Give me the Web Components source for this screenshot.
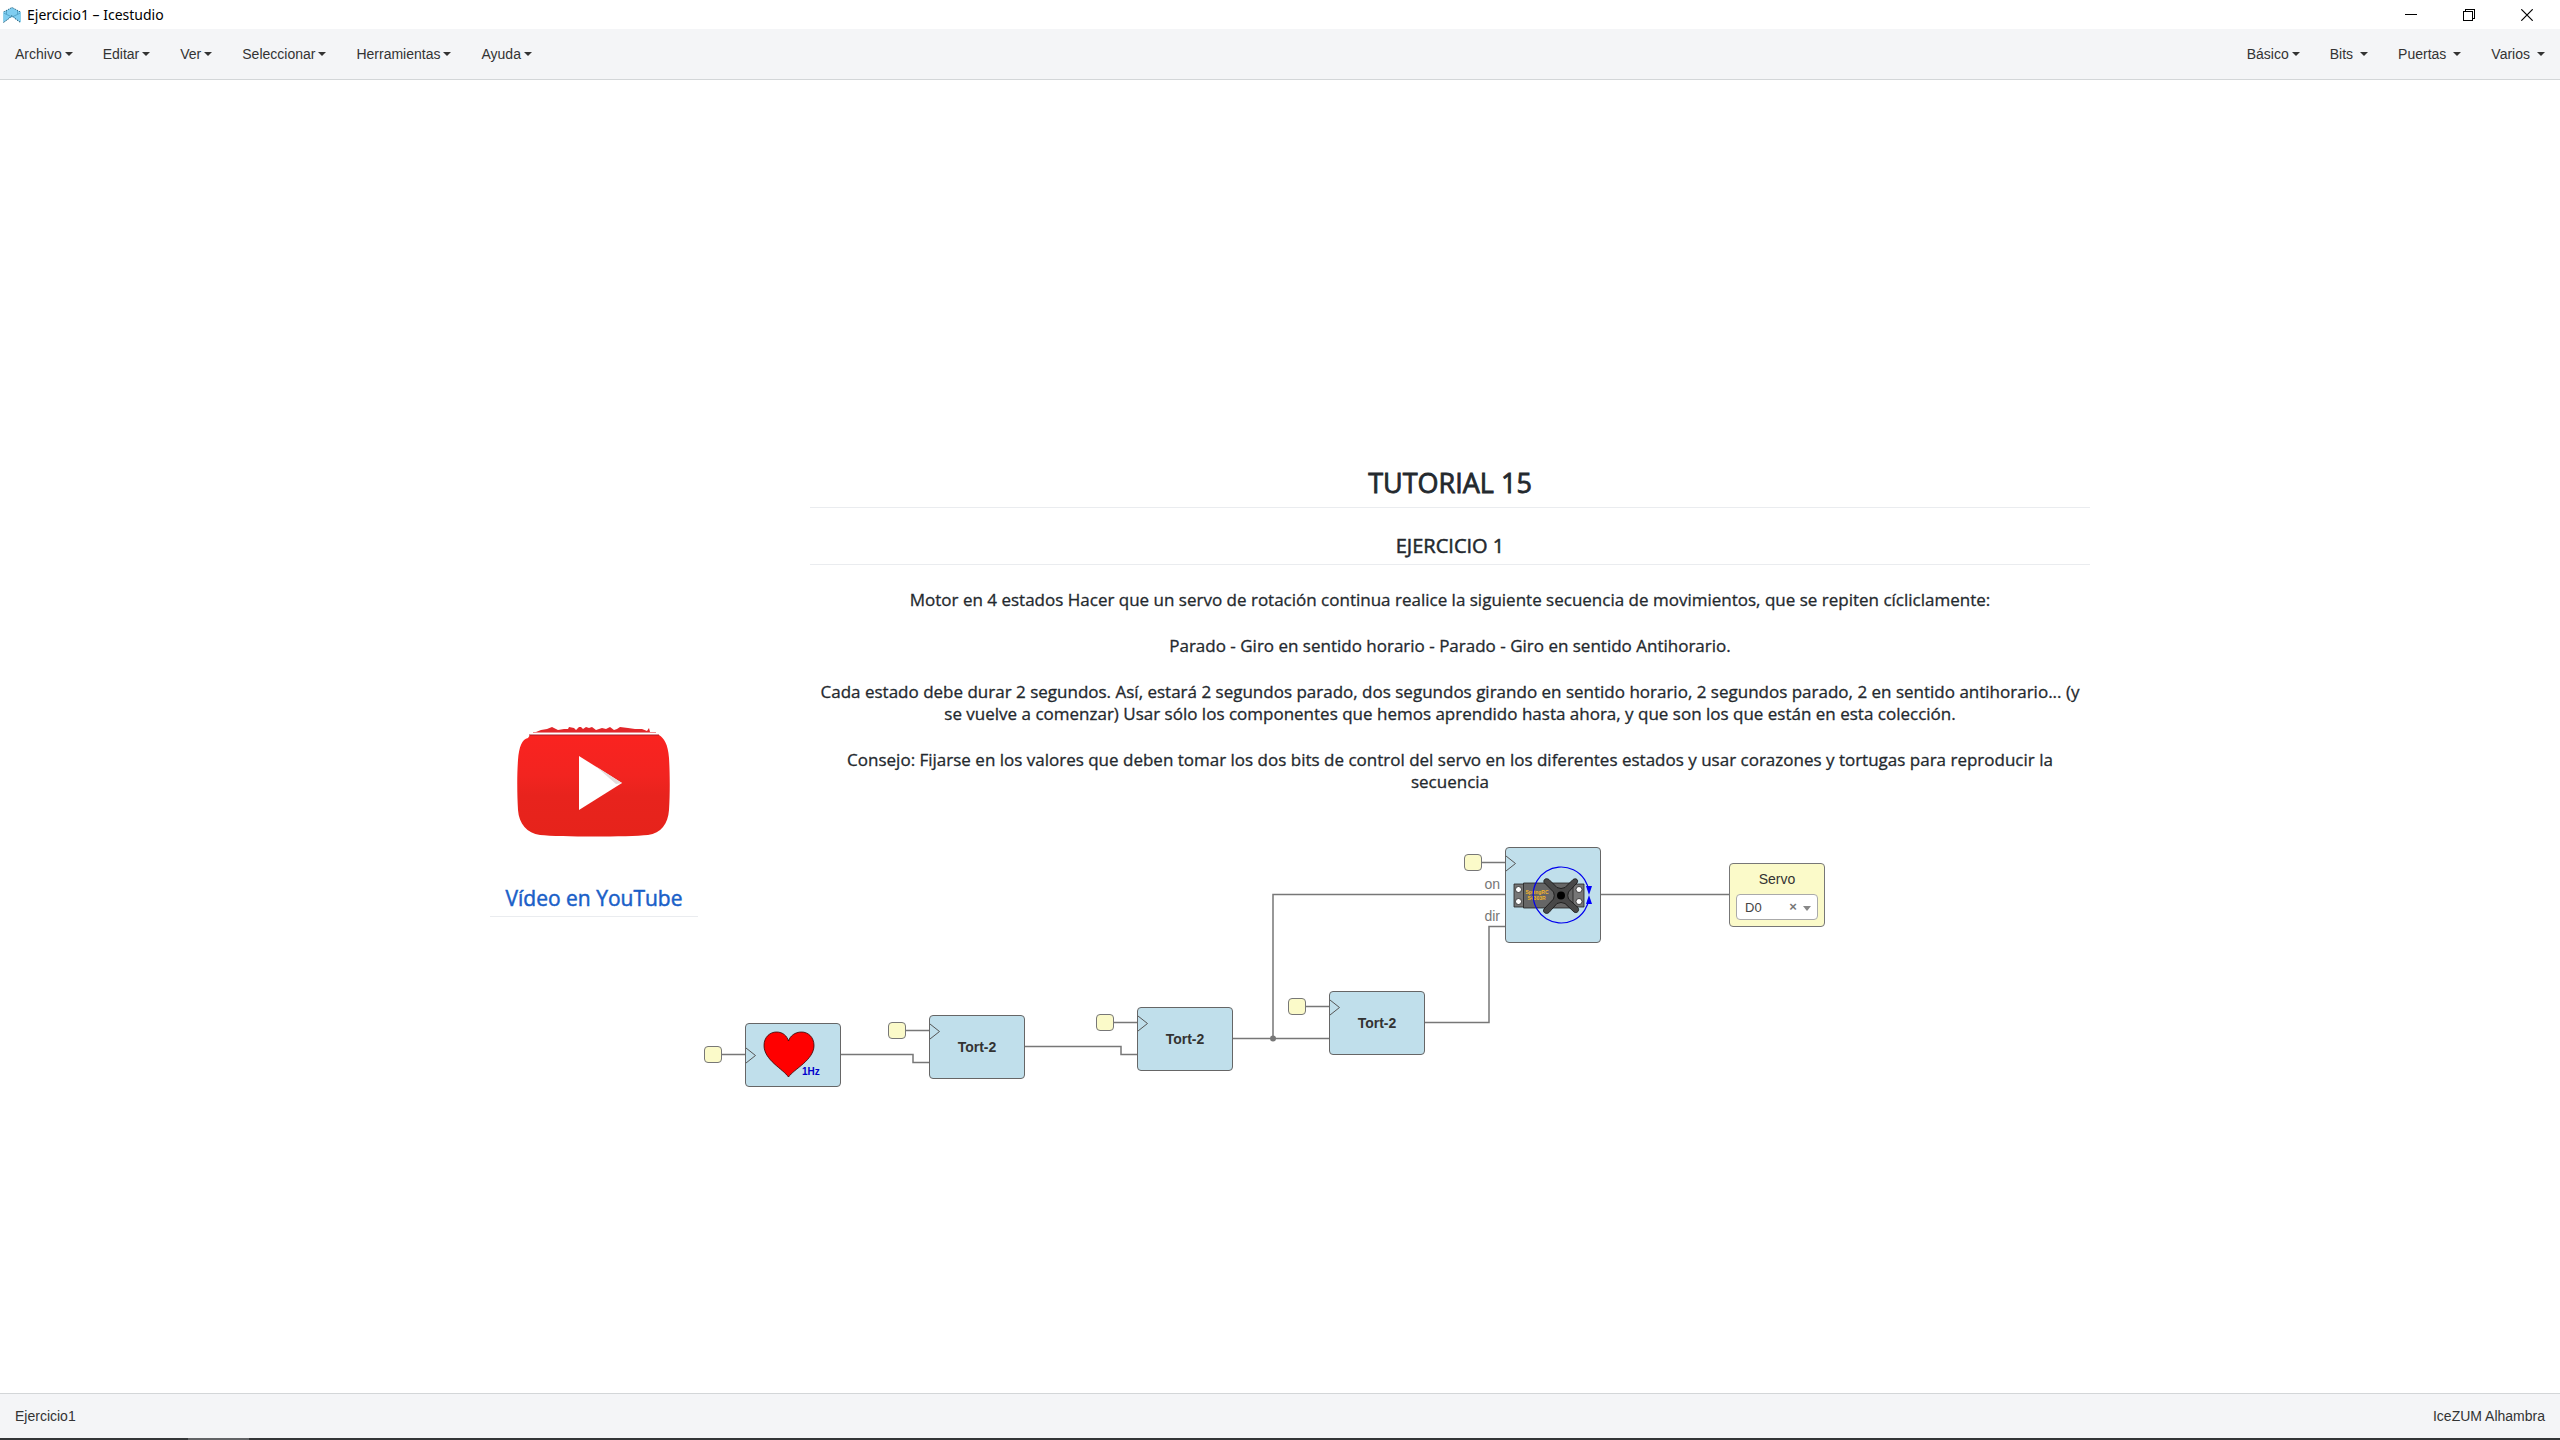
<!DOCTYPE html>
<html lang="es">
<head>
<meta charset="utf-8">
<title>Ejercicio1 – Icestudio</title>
<style>
html, body { margin: 0; height: 100%; }
body { background: #fff; font-family: "Liberation Sans", Arial, sans-serif; font-size: 14px; color: #333; }
</style>
</head>
<body>
<ice-app></ice-app>

<template id="t-app">
<style>
:host { display: flex; flex-direction: column; min-height: 100vh; }
ice-canvas { flex: 1; }
</style>
<ice-titlebar>Ejercicio1 – Icestudio</ice-titlebar>
<ice-menubar>
  <ice-menu>Archivo</ice-menu>
  <ice-menu>Editar</ice-menu>
  <ice-menu>Ver</ice-menu>
  <ice-menu>Seleccionar</ice-menu>
  <ice-menu>Herramientas</ice-menu>
  <ice-menu>Ayuda</ice-menu>
  <ice-menu slot="end">Básico</ice-menu>
  <ice-menu slot="end" spaced>Bits</ice-menu>
  <ice-menu slot="end" spaced>Puertas</ice-menu>
  <ice-menu slot="end" spaced>Varios</ice-menu>
</ice-menubar>
<ice-canvas>
  <ice-wires></ice-wires>
  <ice-video x="490" y="646"></ice-video>
  <ice-doc x="810" y="386"></ice-doc>

  <ice-pin x="704" y="966"></ice-pin>
  <ice-block x="745" y="943" w="96" h="64" clk="32"><ice-heart></ice-heart></ice-block>

  <ice-pin x="888" y="942"></ice-pin>
  <ice-block x="929" y="935" w="96" h="64" clk="16">Tort-2</ice-block>

  <ice-pin x="1096" y="934"></ice-pin>
  <ice-block x="1137" y="927" w="96" h="64" clk="16">Tort-2</ice-block>

  <ice-pin x="1288" y="918"></ice-pin>
  <ice-block x="1329" y="911" w="96" h="64" clk="16">Tort-2</ice-block>

  <ice-pin x="1464" y="774"></ice-pin>
  <ice-port-label x="1464" y="796">on</ice-port-label>
  <ice-port-label x="1464" y="828">dir</ice-port-label>
  <ice-block x="1505" y="767" w="96" h="96" clk="16"><ice-servo-art></ice-servo-art></ice-block>

  <ice-output x="1729" y="783">Servo</ice-output>
</ice-canvas>
<ice-statusbar>Ejercicio1<span slot="end">IceZUM Alhambra</span></ice-statusbar>
<ice-taskbar-edge></ice-taskbar-edge>
</template>

<template id="t-titlebar">
<style>
:host { display: flex; align-items: center; height: 29px; padding: 0 4px 0 3px; background: #fff; color: #000;
  font-family: "Noto Sans", "Open Sans", sans-serif; font-size: 14px; }
.logo { width: 18px; height: 16px; margin-right: 6px; }
.name { flex: 1; }
button { width: 58px; height: 29px; padding: 0; border: 0; background: none; display: flex; align-items: center; justify-content: center; }
</style>
<svg class="logo" viewBox="0 0 18 16">
  <path d="M9 0.500L17.500 5V15.500L12.500 12L9 9.500L5.500 12L.5 15.500V5Z" fill="#7fcdf0"/>
  <path d="M.5 5L9 .5L17.500 5" fill="none" stroke="#2f6d8a" stroke-width="1" stroke-dasharray="1.500 1"/>
  <path d="M.5 6L9 10L17.500 6M3.500 4V7M14.500 4V7" fill="none" stroke="#4a9cc0" stroke-width=".8"/>
  <path d="M.5 15.500L6 11.500L9 8.500L12 11.500L17.500 15.500" fill="none" stroke="#255a74" stroke-width="1" stroke-dasharray="1.500 1"/>
  <path d="M.5 5V15M17.500 5V15" stroke="#8fd0ea" stroke-width="1"/>
</svg>
<span class="name"><slot></slot></span>
<button aria-label="Minimizar"><svg width="12" height="12" shape-rendering="crispEdges"><path d="M0 5.5H12" stroke="#000"/></svg></button>
<button aria-label="Restaurar"><svg width="12" height="12" shape-rendering="crispEdges" fill="none" stroke="#000"><path d="M.5 2.500H9.500V11.500H.500Z M2.500 2.500V.500H11.500V9.500H9.500"/></svg></button>
<button aria-label="Cerrar"><svg width="12" height="12" stroke="#000" stroke-width="1.200"><path d="M.300 .300L11.700 11.700M11.700 .300L.300 11.700"/></svg></button>
</template>

<template id="t-menubar">
<style>
:host { display: block; }
nav { display: flex; justify-content: space-between; height: 50px; background: #f4f5f7; border-bottom: 1px solid #d3d6d8; }
div { display: flex; }
</style>
<nav><div><slot></slot></div><div><slot name="end"></slot></div></nav>
</template>

<template id="t-menu">
<style>
:host { display: block; }
button { display: flex; align-items: center; height: 50px; padding: 0 15px; border: 0; background: none; font: inherit; color: #333; }
i { width: 0; height: 0; margin-left: 3px; border: 4px solid transparent; border-top-color: #333; border-bottom: 0; }
:host([spaced]) i { margin-left: 7px; }
</style>
<button aria-haspopup="true"><slot></slot><i></i></button>
</template>

<template id="t-canvas">
<style>
:host { display: block; position: relative; overflow: hidden; background: #fff; }
</style>
<slot></slot>
</template>

<template id="t-wires">
<style>
:host { position: absolute; inset: 0; }
svg { display: block; width: 100%; height: 100%; }
</style>
<svg fill="none" stroke="#777" stroke-width="1.500">
  <path d="M721 974.500H745 M905 950.500H929 M1113 942.500H1137 M1305 926.500H1329 M1481 782.500H1505"/>
  <path d="M841 974.500H913V982.500H929"/>
  <path d="M1025 966.500H1121V974.500H1137"/>
  <path d="M1233 958.500H1329"/>
  <path d="M1273 958.500V814.500H1505"/>
  <path d="M1425 942.500H1489V846.500H1505"/>
  <path d="M1601 814.500H1729"/>
  <circle cx="1273" cy="958.500" r="3" fill="#777" stroke="none"/>
</svg>
</template>

<template id="t-video">
<style>
:host { position: absolute; width: 208px; }
a { display: block; color: #1a5fc8; text-decoration: none; }
svg { display: block; margin: 0 auto; }
h3 { margin: 44px 0 0; padding-bottom: 6px; border-bottom: 1px solid #eaecef; text-align: center;
  font: 400 21px/24px "Open Sans", "Noto Sans", sans-serif; -webkit-text-stroke: .5px; }
</style>
<a href="#video">
<svg width="156" height="116" viewBox="0 0 156 116">
  <defs><linearGradient id="g" x2="0" y2="1"><stop offset="0" stop-color="#fa2320"/><stop offset=".4" stop-color="#f22420"/><stop offset=".6" stop-color="#e8231d"/><stop offset="1" stop-color="#e6231b"/></linearGradient></defs>
  <path d="M20 6 L25 4 L31 3 L36 1 L42 4 L48 3 L52 3 L53 1 L58 2 L60 4 L63 1 L65 1 L67 3 L70 1 L73 2 L76 1 L80 4 L86 2 L90 3 L94 1 L98 4 L101 3 L104 1 L112 2 L119 3 L126 3 L131 5 L133 2 L134 6 L139 6 Z" fill="#e2262a"/>
  <path d="M17 6.500H140" stroke="#f08a8e" stroke-width="1"/>
  <path d="M14 9H143C148 12 152 18 153 32C154 48 154 68 153 84C152 98 145 107 132 109C112 111 44 111 24 109C11 107 3 98 2 84C1 68 1 48 2 34C3 21 6 13 12 12Z" fill="url(#g)"/>
  <path d="M13 9H143" stroke="#a51c26" stroke-width="1"/>
  <path d="M63 30L106 57L63 84Z" fill="#fff"/>
  <path d="M80 40.500L106 57L100 58Z" fill="#e4dcdc"/>
</svg>
<h3>Vídeo en YouTube</h3>
</a>
</template>

<template id="t-doc">
<style>
:host { position: absolute; width: 1280px; text-align: center; color: #24292e; font: 17px/22px "Open Sans", "Noto Sans", sans-serif; -webkit-text-stroke: .3px; }
h1, h2 { margin: 0; border-bottom: 1px solid #eaecef; font-weight: 400; }
h1 { padding-bottom: 7px; font-size: 27px; line-height: 34px; -webkit-text-stroke: .8px; }
h2 { margin-top: 26px; padding-bottom: 6px; font-size: 20px; line-height: 24px; -webkit-text-stroke: .5px; }
p { margin: 24px 0 0; }
</style>
<h1>TUTORIAL 15</h1>
<h2>EJERCICIO 1</h2>
<p>Motor en 4 estados Hacer que un servo de rotación continua realice la siguiente secuencia de movimientos, que se repiten cícliclamente:</p>
<p>Parado - Giro en sentido horario - Parado - Giro en sentido Antihorario.</p>
<p>Cada estado debe durar 2 segundos. Así, estará 2 segundos parado, dos segundos girando en sentido horario, 2 segundos parado, 2 en sentido antihorario... (y se vuelve a comenzar) Usar sólo los componentes que hemos aprendido hasta ahora, y que son los que están en esta colección.</p>
<p>Consejo: Fijarse en los valores que deben tomar los dos bits de control del servo en los diferentes estados y usar corazones y tortugas para reproducir la secuencia</p>
</template>

<template id="t-pin">
<style>
:host { position: absolute; width: 18px; height: 17px; box-sizing: border-box; border: 1px solid #777; border-radius: 4px; background: #fbfac9; }
</style>
</template>

<template id="t-port-label">
<style>
:host { position: absolute; width: 36px; text-align: right; line-height: 16px; color: #777; }
</style>
<slot></slot>
</template>

<template id="t-block">
<style>
:host { position: absolute; display: flex; align-items: center; justify-content: center; box-sizing: border-box;
  border: 1px solid #666; border-radius: 4px; background: #c0dfeb; font-weight: bold; color: #333; }
.clk { position: absolute; left: 0; margin-top: -9px; }
</style>
<svg class="clk" width="11" height="17" fill="none" stroke="#555"><path d="M0 1L9.500 8.500L0 16"/></svg>
<slot></slot>
</template>

<template id="t-heart">
<style>:host { display: block; } svg { display: block; } text { font: bold 10px "Liberation Sans", Arial, sans-serif; fill: #00c; }</style>
<svg width="94" height="62" viewBox="1 1 94 62">
  <path d="M43.500 54C38 46 19 37 19 22.500C19 14 25 9 31.500 9C38 9 42 13 43.500 18C45 13 50 9 56.500 9C63 9 69 14 69 22.500C69 37 49 46 43.500 54Z" fill="#f00" stroke="#300" stroke-width=".8"/>
  <text x="57" y="52">1Hz</text>
</svg>
</template>

<template id="t-servo-art">
<style>:host { display: block; } svg { display: block; } text { font: bold 5px "Liberation Sans", Arial, sans-serif; fill: #f5b52a; }</style>
<svg width="94" height="94" viewBox="1 1 94 94">
  <g stroke="#222" stroke-width=".8">
    <path d="M9 37H79V60H9Z" fill="#777"/>
    <path d="M18.500 36H68V61H18.500Z" fill="#666"/>
    <g fill="#fff"><circle cx="13.500" cy="42.500" r="3"/><circle cx="13.500" cy="54.500" r="3"/><circle cx="74" cy="42.500" r="3"/><circle cx="74" cy="54.500" r="3"/></g>
  </g>
  <text x="20.500" y="47">SpringRC</text>
  <text x="22.500" y="53">S4303R</text>
  <path d="M84 45A28 28 0 1 0 84 51" fill="none" stroke="#00e" stroke-width="1.200"/>
  <path d="M81 39H87L84 48ZM81 57H87L84 48Z" fill="#00f"/>
  <path d="M39 35.500C38 32.500 41 30.500 44 32.500L52 40.500Q56 42.500 60 40.500L68 32.500C71 30.500 74 33 72 36L63.500 45Q62 48.500 63.500 52L73 60.500C75 63.500 72 67 69 65L60 56.500Q56 54.500 52 56.500L44 65.500C41 68 37 65 39 62L48.500 52Q50 48.500 48.500 45Z" fill="#484848" stroke="#111" stroke-width=".8"/>
  <circle cx="56" cy="48.500" r="4" fill="#000"/>
</svg>
</template>

<template id="t-output">
<style>
:host { position: absolute; box-sizing: border-box; width: 96px; height: 64px; padding: 6px; border: 1px solid #777; border-radius: 4px; background: #fbfac9; }
label { display: block; line-height: 18px; margin-bottom: 6px; text-align: center; }
.box { position: relative; }
select { appearance: none; display: block; box-sizing: border-box; width: 100%; height: 26px; padding: 0 0 0 8px; border: 1px solid #aaa; border-radius: 4px; background: #fff; font: 13px "Liberation Sans", Arial, sans-serif; color: #444; }
button { position: absolute; right: 19px; top: 5px; width: 12px; height: 16px; padding: 0; border: 0; background: none; font: bold 13px/16px "Liberation Sans", Arial, sans-serif; color: #777; }
i { position: absolute; right: 7px; top: 12px; border: 4px solid transparent; border-top: 5px solid #888; border-bottom: 0; pointer-events: none; }
</style>
<label for="pin"><slot></slot></label>
<div class="box">
  <select id="pin"><option>D0</option></select>
  <button aria-label="Quitar">×</button><i></i>
</div>
</template>

<template id="t-statusbar">
<style>
:host { display: block; }
footer { display: flex; justify-content: space-between; padding: 1px 15px 0; background: #f4f5f7; border-top: 1px solid #d3d6d8; line-height: 43px; }
</style>
<footer><span><slot></slot></span><slot name="end"></slot></footer>
</template>

<template id="t-taskbar-edge">
<style>
:host { display: flex; height: 2px; padding-left: 188px; background: #343638; }
i { width: 61px; background: #626466; }
</style>
<i></i>
</template>

<script>
class IceElement extends HTMLElement {
  constructor() {
    super();
    const name = this.localName.slice(4);
    this.attachShadow({ mode: 'open' })
      .append(document.getElementById('t-' + name).content.cloneNode(true));
  }
}

/* An element placed by its x and y attributes on the design canvas. */
class IceNode extends IceElement {
  connectedCallback() {
    this.style.left = this.getAttribute('x') + 'px';
    this.style.top = this.getAttribute('y') + 'px';
  }
}

class IceBlock extends IceNode {
  connectedCallback() {
    super.connectedCallback();
    this.style.width = this.getAttribute('w') + 'px';
    this.style.height = this.getAttribute('h') + 'px';
    this.shadowRoot.querySelector('.clk').style.top = this.getAttribute('clk') + 'px';
  }
}

for (const name of ['titlebar', 'menubar', 'menu', 'canvas', 'wires', 'heart', 'servo-art', 'statusbar', 'taskbar-edge'])
  customElements.define('ice-' + name, class extends IceElement {});
for (const name of ['video', 'doc', 'pin', 'port-label', 'output'])
  customElements.define('ice-' + name, class extends IceNode {});
customElements.define('ice-block', IceBlock);
customElements.define('ice-app', class extends IceElement {});
</script>
</body>
</html>
